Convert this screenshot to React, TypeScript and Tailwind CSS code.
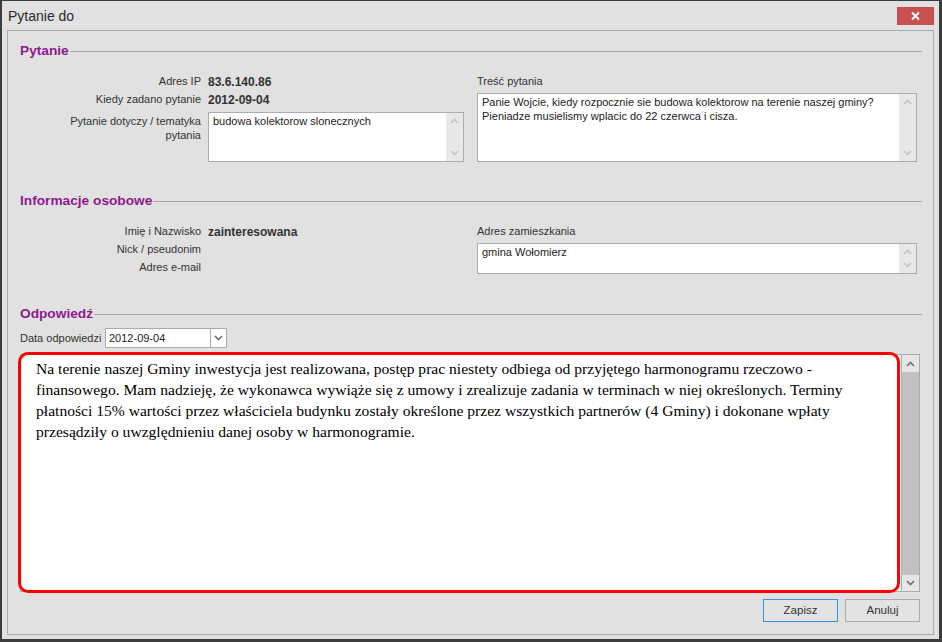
import React from "react";

const UI = { fontFamily: "'Liberation Sans', Arial, sans-serif" };

function ChevUp({ color = "#c4c4c4" }: { color?: string }) {
  return (
    <svg width="9" height="6" viewBox="0 0 9 6">
      <polyline points="1,5 4.5,1.5 8,5" fill="none" stroke={color} strokeWidth="1.6" />
    </svg>
  );
}
function ChevDown({ color = "#c4c4c4" }: { color?: string }) {
  return (
    <svg width="9" height="6" viewBox="0 0 9 6">
      <polyline points="1,1 4.5,4.5 8,1" fill="none" stroke={color} strokeWidth="1.6" />
    </svg>
  );
}

function SectionHeader({ title }: { title: string }) {
  return (
    <div className="flex items-center h-[16px]">
      <span className="text-[13.7px] font-bold text-[#8d1a8d] leading-none whitespace-nowrap">{title}</span>
      <div className="flex-1 h-px bg-[#a6a6a6] ml-[1px]" />
    </div>
  );
}

function SmallArea({ text, h, lines }: { text?: string; h: string; lines?: string[] }) {
  return (
    <div className={`flex bg-white border border-[#abadb3] ${h}`}>
      <div className="flex-1 pl-[4px] pt-[1px] text-[11px] leading-[14px] text-[#222] whitespace-nowrap overflow-hidden">
        {lines ? lines.map((l, i) => <div key={i}>{l}</div>) : text}
      </div>
      <div className="w-[17px] bg-[#e8e8e8] flex flex-col justify-between items-center py-[5px]">
        <ChevUp />
        <ChevDown />
      </div>
    </div>
  );
}

function Row({ label, value }: { label: string; value?: string }) {
  return (
    <div className="flex items-center h-[18px]">
      <div className="w-[181px] text-right text-[11px] text-[#333] whitespace-nowrap">{label}</div>
      <div className="ml-[7px] text-[12px] leading-[14px] pt-[1px] font-bold text-[#333]">{value}</div>
    </div>
  );
}

export default function App() {
  return (
    <div
      className="w-[942px] h-[642px] bg-[#e1e1e1] border-l-2 border-t border-r-[3px] border-b-[3px] border-[#3c3c3c] flex flex-col overflow-hidden"
      style={UI}
    >
      {/* Title bar */}
      <div className="h-[29px] flex items-start justify-between shrink-0">
        <div className="pl-[6px] pt-[7px] text-[14px] leading-[17px] text-[#2b2b2b]">Pytanie do</div>
        <div className="mt-[6px] mr-[5px] w-[37px] h-[18px] bg-[#c75050] flex items-center justify-center">
          <svg width="9" height="8" viewBox="0 0 9 8">
            <line x1="1" y1="0.5" x2="8" y2="7.5" stroke="white" strokeWidth="2" />
            <line x1="8" y1="0.5" x2="1" y2="7.5" stroke="white" strokeWidth="2" />
          </svg>
        </div>
      </div>

      {/* Panel */}
      <div className="flex-1 mx-[5px] mb-[4px] border border-[#ababab] pt-[12px] pl-[12px] pr-[11px] flex flex-col">
        <SectionHeader title="Pytanie" />
        <div className="flex mt-[13px] pr-[5px]">
          <div className="w-[444px] flex flex-col">
            <Row label="Adres IP" value="83.6.140.86" />
            <Row label="Kiedy zadano pytanie" value="2012-09-04" />
            <div className="flex mt-[4px]">
              <div className="w-[181px] text-right text-[11px] leading-[14px] pt-[2px] text-[#333]">
                Pytanie dotyczy / tematyka
                <br />
                pytania
              </div>
              <div className="ml-[7px] flex-1">
                <SmallArea text="budowa kolektorow slonecznych" h="h-[50px]" />
              </div>
            </div>
          </div>
          <div className="flex-1 ml-[13px] flex flex-col">
            <div className="h-[18px] flex items-center text-[11px] text-[#333]">Treść pytania</div>
            <div className="mt-[3px]">
              <SmallArea
                h="h-[69px]"
                lines={[
                  "Panie Wojcie, kiedy rozpocznie sie budowa kolektorow na terenie naszej gminy?",
                  "Pieniadze musielismy wplacic do 22 czerwca i cisza.",
                ]}
              />
            </div>
          </div>
        </div>

        <div className="mt-[31px]">
          <SectionHeader title="Informacje osobowe" />
        </div>
        <div className="flex mt-[13px] pr-[5px]">
          <div className="w-[444px] flex flex-col">
            <Row label="Imię i Nazwisko" value="zainteresowana" />
            <Row label="Nick / pseudonim" />
            <Row label="Adres e-mail" />
          </div>
          <div className="flex-1 ml-[13px] flex flex-col">
            <div className="h-[18px] flex items-center text-[11px] text-[#333]">Adres zamieszkania</div>
            <div className="mt-[3px]">
              <SmallArea text="gmina Wołomierz" h="h-[31px]" />
            </div>
          </div>
        </div>

        <div className="mt-[30px]">
          <SectionHeader title="Odpowiedź" />
        </div>
        <div className="flex items-center mt-[6px] h-[20px]">
          <span className="text-[11px] text-[#333] w-[85px] whitespace-nowrap">Data odpowiedzi</span>
          <div className="w-[122px] h-[20px] bg-white border border-[#ababab] flex">
            <div className="flex-1 pl-[3px] text-[11px] leading-[18px] text-[#222]">2012-09-04</div>
            <div className="w-[16px] border-l border-[#ababab] bg-white flex items-center justify-center">
              <ChevDown color="#707070" />
            </div>
          </div>
        </div>

        {/* Answer textarea */}
        <div className="relative mt-[6px] mr-[2px] h-[238px] bg-white border border-[#ababab] flex">
          <div
            className="flex-1 pl-[15px] pt-[3px] text-[15.6px] leading-[21px] text-black whitespace-nowrap"
            style={{ fontFamily: "'Liberation Serif', 'Times New Roman', serif" }}
          >
            <div>Na terenie naszej Gminy inwestycja jest realizowana, postęp prac niestety odbiega od przyjętego harmonogramu rzeczowo -</div>
            <div>finansowego. Mam nadzieję, że wykonawca wywiąże się z umowy i zrealizuje zadania w terminach w niej określonych. Terminy</div>
            <div>płatności 15% wartości przez właściciela budynku zostały określone przez wszystkich partnerów (4 Gminy) i dokonane wpłaty</div>
            <div>przesądziły o uwzględnieniu danej osoby w harmonogramie.</div>
          </div>
          <div className="w-[18px] border-l border-[#ababab] flex flex-col">
            <div className="h-[17px] bg-[#e6e6e6] flex items-center justify-center">
              <ChevUp color="#707070" />
            </div>
            <div className="flex-1 bg-[#c1c1c1]" />
            <div className="h-[16px] bg-[#e6e6e6] flex items-center justify-center">
              <ChevDown color="#707070" />
            </div>
          </div>
          <div className="absolute -left-[3px] -top-[3px] w-[882px] h-[241px] border-[3px] border-[#ff0000] rounded-[10px] pointer-events-none" />
        </div>

        <div className="flex justify-end gap-[7px] mt-[7px] mr-[2px]">
          <button className="w-[75px] h-[23px] border border-[#3d8ee6] bg-[#e3e3e3] text-[11.5px] text-[#333]">Zapisz</button>
          <button className="w-[75px] h-[23px] border border-[#acacac] bg-[#e3e3e3] text-[11.5px] text-[#333]">Anuluj</button>
        </div>
      </div>
    </div>
  );
}
